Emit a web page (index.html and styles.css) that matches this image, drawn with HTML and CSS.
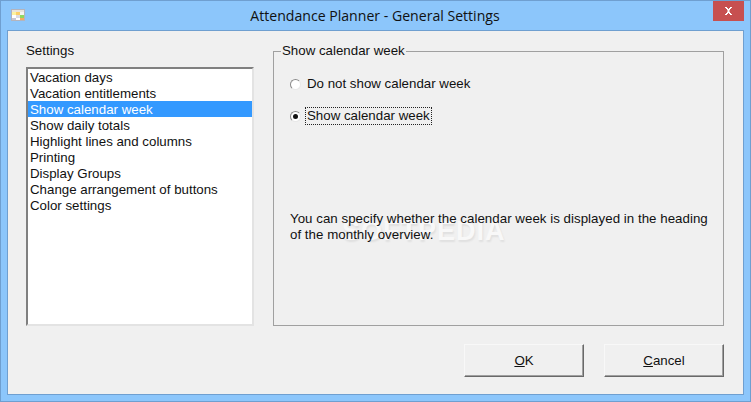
FILE: index.html
```html
<!DOCTYPE html>
<html lang="en">
<head>
  <meta charset="UTF-8">
  <title>Attendance Planner - General Settings</title>
  <link rel="stylesheet" href="styles.css">
</head>
<body>

<div class="window">
  <div class="titlebar">
    <svg class="app-icon" width="14" height="12" viewBox="0 0 14 12">
      <rect width="14" height="12" fill="#b4b4bc"/>
      <rect x="1" y="1" width="12" height="2" fill="#e8e4dc"/>
      <rect x="1" y="3" width="4" height="3" fill="#fdf3a0"/>
      <rect x="5" y="3" width="4" height="3" fill="#fbd06a"/>
      <rect x="9" y="3" width="4" height="3" fill="#f4f4f0"/>
      <rect x="1" y="6" width="4" height="3" fill="#ffffff"/>
      <rect x="5" y="6" width="4" height="3" fill="#dcdce4"/>
      <rect x="9" y="6" width="4" height="3" fill="#8ed860"/>
      <rect x="1" y="9" width="4" height="2" fill="#c8c8d4"/>
      <rect x="5" y="9" width="4" height="2" fill="#ffffff"/>
      <rect x="9" y="9" width="4" height="2" fill="#f8a860"/>
    </svg>
    <div class="title">Attendance Planner - General Settings</div>
    <div class="close">
      <svg width="9" height="8" viewBox="0 0 9 8">
        <path d="M1 0h2v1h1v1h1V1h1V0h2v1H7v1H6v1H5.500v2H6v1h1v1h1v1H6V7H5V6H4v1H3v1H1V7h1V6h1V5h.5V3H3V2H2V1H1z" fill="#fff"/>
      </svg>
    </div>
  </div>

  <div class="client">
    <div class="panels">
      <div class="settings">
        <div class="settings-label">Settings</div>
        <ul class="listbox">
          <li>Vacation days</li>
          <li>Vacation entitlements</li>
          <li class="selected">Show calendar week</li>
          <li>Show daily totals</li>
          <li>Highlight lines and columns</li>
          <li>Printing</li>
          <li>Display Groups</li>
          <li>Change arrangement of buttons</li>
          <li>Color settings</li>
        </ul>
      </div>

      <fieldset class="group">
        <legend>Show calendar week</legend>
        <div class="radio-row">
          <span class="radio"></span>
          <span class="radio-text">Do not show calendar week</span>
        </div>
        <div class="radio-row">
          <span class="radio checked"></span>
          <span class="radio-text focused">Show calendar week</span>
        </div>
        <div class="watermark">SOFTPEDIA</div>
        <p class="hint">You can specify whether the calendar week is displayed in the heading of the monthly overview.</p>
      </fieldset>
    </div>

    <div class="buttons">
      <button><u>O</u>K</button>
      <button><u>C</u>ancel</button>
    </div>
  </div>
</div>

</body>
</html>
```

FILE: styles.css
```css
* {
  box-sizing: border-box;
}

body {
  margin: 0;
  width: 751px;
  height: 402px;
  overflow: hidden;
  font-family: "Liberation Sans", Arial, sans-serif;
  font-size: 13.300px;
  color: #111;
  background: #8cc6fb;
}

.window {
  display: flex;
  flex-direction: column;
  width: 751px;
  height: 402px;
  padding: 0 6px 6px 6px;
  border: 1px solid #6f9fd0;
  background: #8cc6fb;
}

.titlebar {
  display: flex;
  align-items: flex-start;
  height: 29px;
  flex: none;
}

.app-icon {
  margin: 8px 0 0 4px;
  flex: none;
}

.title {
  flex: 1;
  padding: 6px 0 0 12px;
  text-align: center;
  font-family: "Open Sans", sans-serif;
  font-size: 14.100px;
  line-height: 18px;
  color: #111;
}

.close {
  display: flex;
  align-items: center;
  justify-content: center;
  width: 31px;
  height: 20px;
  background: #c75050;
  flex: none;
}

/* dialog body */
.client {
  flex: 1;
  display: flex;
  flex-direction: column;
  background: #f0f0f0;
  border: 1px solid #6f9fd0;
}

.panels {
  display: flex;
  gap: 19px;
  padding: 12px 19px 0 18px;
}

.settings {
  width: 228px;
  flex: none;
}

.settings-label {
  height: 24px;
  line-height: 16px;
}

.listbox {
  list-style: none;
  margin: 0;
  padding: 0;
  height: 259px;
  background: #fff;
  border: 2px solid;
  border-color: #808080 #e3e3e3 #e3e3e3 #808080;
}

.listbox li {
  height: 16px;
  padding-left: 2px;
  line-height: 17px;
}

.listbox .selected {
  background: #3399ff;
  color: #fff;
}

.group {
  position: relative;
  width: 451px;
  height: 283px;
  margin: 0;
  padding: 0 16px;
  border: 1px solid #a0a0a0;
  min-width: 0;
}

.group legend {
  padding: 0 1px;
  margin-left: -9px;
  line-height: 16px;
}

.radio-row {
  display: flex;
  align-items: center;
  gap: 4px;
  height: 18px;
  margin-bottom: 14px;
}

.radio-row:first-of-type {
  margin-top: 16px;
}

.radio {
  position: relative;
  width: 11px;
  height: 11px;
  border: 1px solid;
  border-color: #8a8a8a #e8e8e8 #e8e8e8 #8a8a8a;
  border-radius: 50%;
  background: #fff;
  flex: none;
}

.radio.checked::after {
  content: "";
  position: absolute;
  top: 2px;
  left: 2px;
  width: 5px;
  height: 5px;
  border-radius: 50%;
  background: #111;
}

.radio-text {
  padding: 0 1px;
  line-height: 16px;
  border: 1px solid transparent;
}

.radio-text.focused {
  border: 1px dotted #222;
}

.hint {
  position: relative;
  margin: 86px -12px 0 0;
  line-height: 16px;
  letter-spacing: 0.03px;
}

.watermark {
  position: absolute;
  left: 68px;
  top: 157px;
  font-size: 27px;
  font-weight: bold;
  letter-spacing: 1px;
  color: #f8f8f8;
  text-shadow: 1px 2px 2px rgba(0, 0, 0, 0.07);
}

.buttons {
  display: flex;
  justify-content: flex-end;
  gap: 20px;
  padding: 18px 19px 0 0;
}

.buttons button {
  width: 120px;
  height: 33px;
  padding: 0;
  font: inherit;
  color: #111;
  background: #f0f0f0;
  border: 1px solid;
  border-color: #f8f8f8 #696969 #696969 #f8f8f8;
  box-shadow: inset -1px -1px 0 #a0a0a0;
}
```
